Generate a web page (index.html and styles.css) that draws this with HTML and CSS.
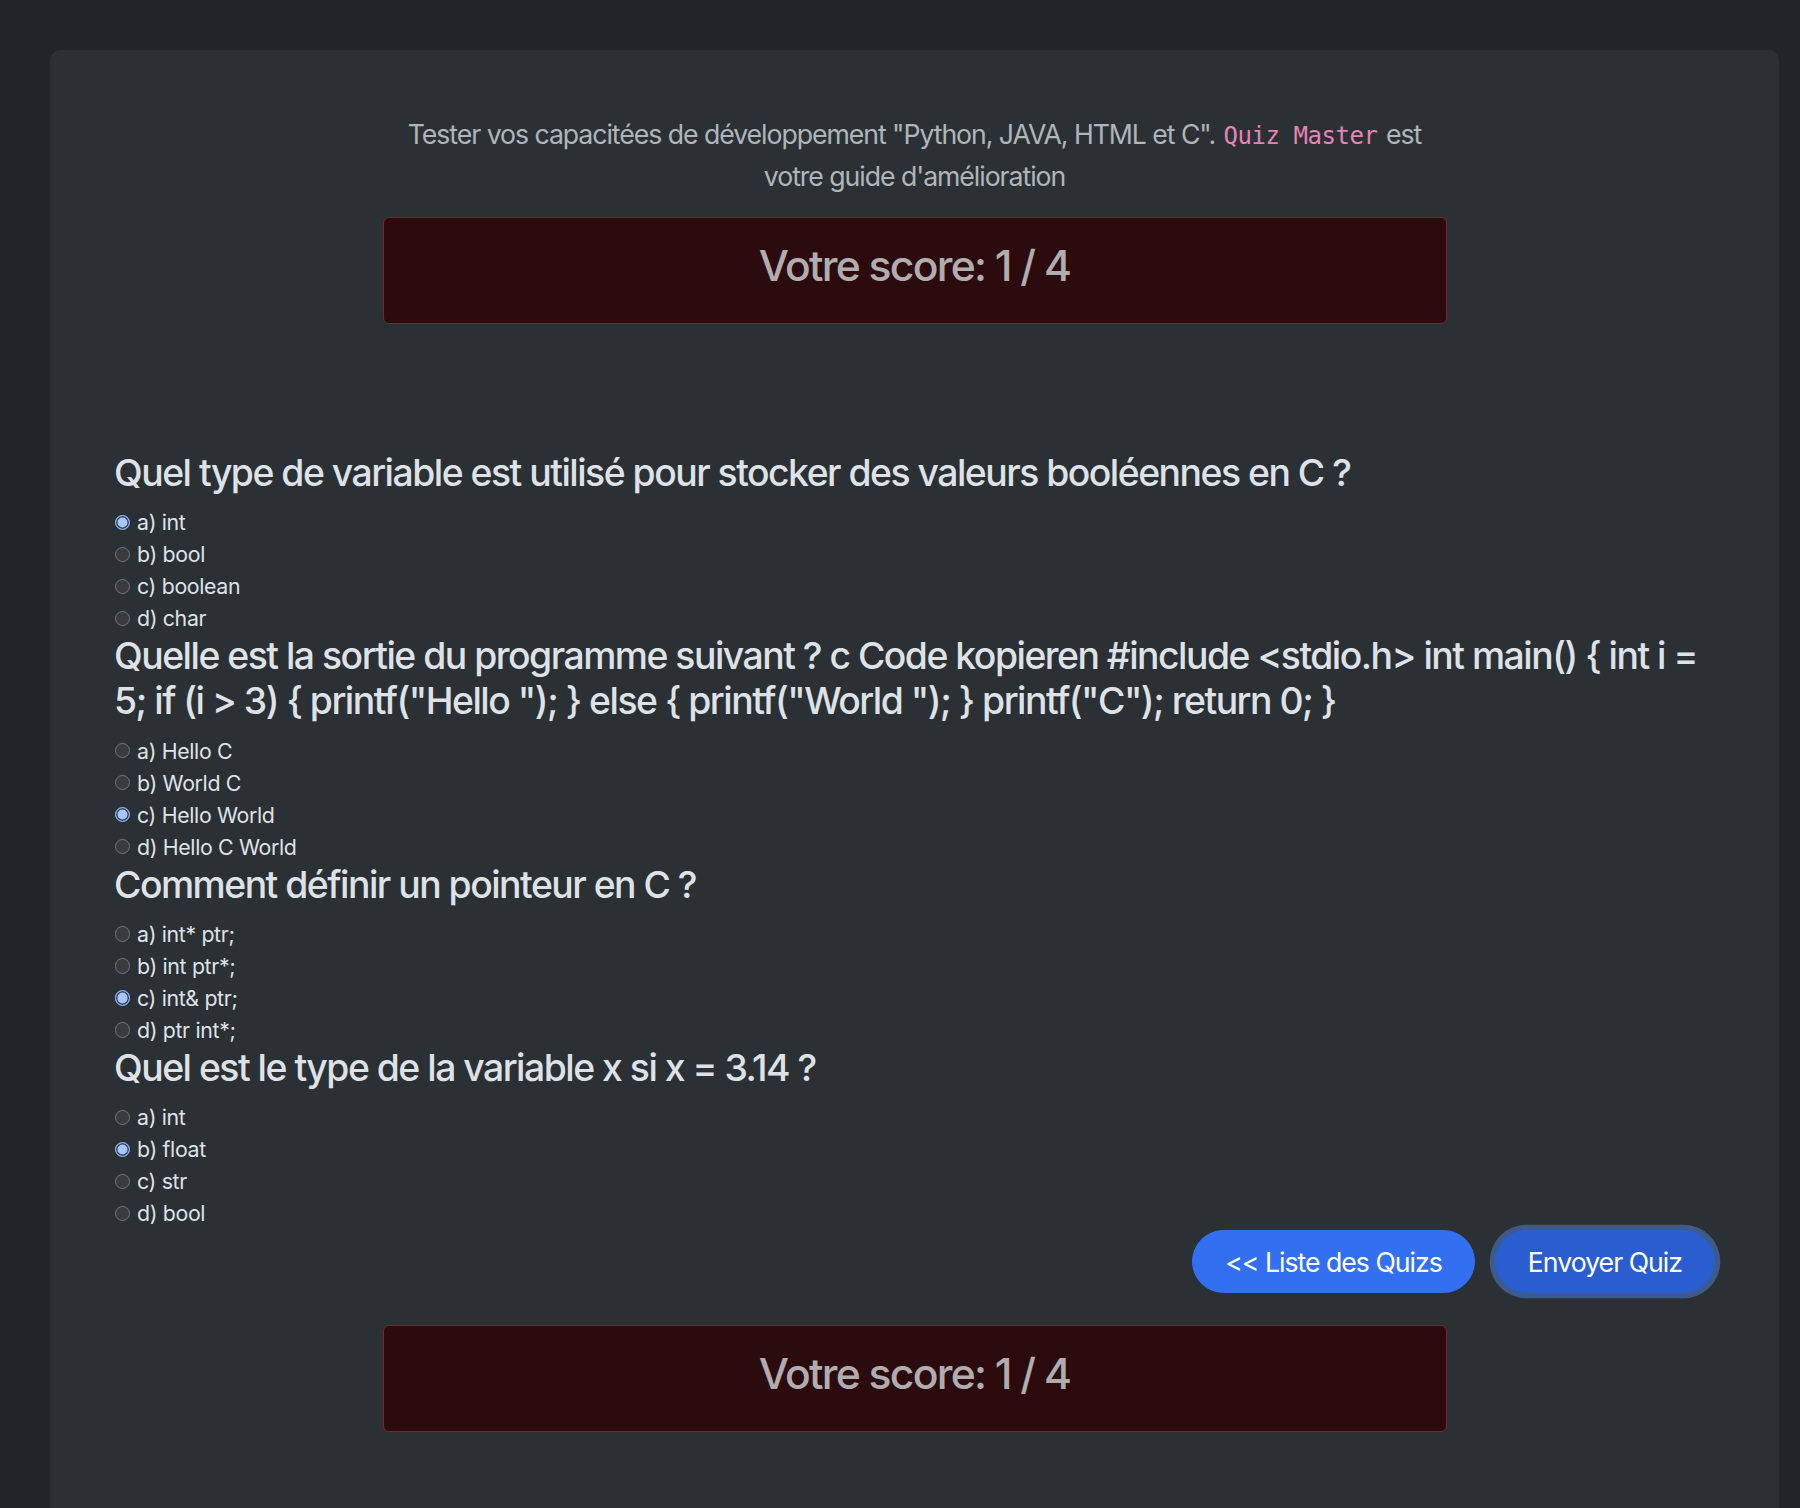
FILE: index.html
```html
<!DOCTYPE html>
<html lang="fr">
<head>
<meta charset="utf-8">
<title>Quiz Master</title>
<link rel="stylesheet" href="styles.css">
</head>
<body>
<main class="card">
  <p class="intro">Tester vos capacitées de développement "Python, JAVA, HTML et C". <code>Quiz Master</code> est votre guide d'amélioration</p>
  <div class="score"><h2>Votre score: 1 / 4</h2></div>

  <form class="quiz">
    <section class="question">
      <h3>Quel type de variable est utilisé pour stocker des valeurs booléennes en C ?</h3>
      <label class="opt"><input type="radio" name="q1" checked> a) int</label>
      <label class="opt"><input type="radio" name="q1"> b) bool</label>
      <label class="opt"><input type="radio" name="q1"> c) boolean</label>
      <label class="opt"><input type="radio" name="q1"> d) char</label>
    </section>
    <section class="question">
      <h3>Quelle est la sortie du programme suivant ? c Code kopieren #include &lt;stdio.h&gt; int main() { int i = 5; if (i &gt; 3) { printf("Hello "); } else { printf("World "); } printf("C"); return 0; }</h3>
      <label class="opt"><input type="radio" name="q2"> a) Hello C</label>
      <label class="opt"><input type="radio" name="q2"> b) World C</label>
      <label class="opt"><input type="radio" name="q2" checked> c) Hello World</label>
      <label class="opt"><input type="radio" name="q2"> d) Hello C World</label>
    </section>
    <section class="question">
      <h3>Comment définir un pointeur en C ?</h3>
      <label class="opt"><input type="radio" name="q3"> a) int* ptr;</label>
      <label class="opt"><input type="radio" name="q3"> b) int ptr*;</label>
      <label class="opt"><input type="radio" name="q3" checked> c) int&amp; ptr;</label>
      <label class="opt"><input type="radio" name="q3"> d) ptr int*;</label>
    </section>
    <section class="question">
      <h3>Quel est le type de la variable x si x = 3.14 ?</h3>
      <label class="opt"><input type="radio" name="q4"> a) int</label>
      <label class="opt"><input type="radio" name="q4" checked> b) float</label>
      <label class="opt"><input type="radio" name="q4"> c) str</label>
      <label class="opt"><input type="radio" name="q4"> d) bool</label>
    </section>
    <div class="actions">
      <a class="btn btn-list" href="#">&lt;&lt; Liste des Quizs</a>
      <button type="button" class="btn btn-send">Envoyer Quiz</button>
    </div>
  </form>

  <div class="score score-bottom"><h2>Votre score: 1 / 4</h2></div>
</main>
</body>
</html>
```

FILE: styles.css
```css
html, body {
  margin: 0;
  padding: 0;
}

body {
  background: #212529;
  color: #dee2e6;
  font-family: Inter, "Noto Sans", "Liberation Sans", sans-serif;
  font-size: 21.33px;
  line-height: 32px;
}

.card {
  display: block;
  margin: 50px 21px 0 50px;
  padding: 64px 64px 86px;
  background: #2b3035;
  border-radius: 10.67px 10.67px 0 0;
}

.intro {
  width: 1064px;
  margin: 0 auto 21.33px;
  text-align: center;
  font-size: 26.67px;
  line-height: 40px;
  font-weight: 400;
  color: rgba(222, 226, 230, 0.75);
  letter-spacing: -1.05px;
}

.intro code {
  margin: 0 2px;
  font-family: "DejaVu Sans Mono", "Liberation Mono", monospace;
  font-size: 0.9em;
  color: #e685b5;
  letter-spacing: -0.45px;
}

.score {
  box-sizing: border-box;
  width: 1064px;
  margin: 0 auto;
  padding: 21.33px;
  background: #2c0b0e;
  border: 1.33px solid #842029;
  border-radius: 6px;
  text-align: center;
}

.score h2 {
  margin: 0 0 10.67px;
  font-size: 42.67px;
  line-height: 51.2px;
  font-weight: 500;
  color: rgba(222, 226, 230, 0.75);
  letter-spacing: -1.75px;
}

.quiz {
  margin-top: 127px;
}

.question h3 {
  margin: 0 0 10.67px;
  font-size: 37.33px;
  line-height: 44.8px;
  font-weight: 500;
  color: #dee2e6;
  letter-spacing: -1.5px;
}

.opt {
  display: flex;
  align-items: center;
  height: 32px;
  gap: 7px;
  font-size: 21.33px;
  color: #dee2e6;
  letter-spacing: -0.35px;
}

.opt input {
  appearance: none;
  -webkit-appearance: none;
  box-sizing: border-box;
  width: 15.5px;
  height: 15.5px;
  margin: 0 0 0 0.5px;
  border-radius: 50%;
  border: 1px solid #737476;
  background: #3a3b3c;
  flex: none;
}

.opt input:checked {
  border: 1.5px solid #8db5f6;
  background: #a7c7fa;
  box-shadow: inset 0 0 0 1.5px #33405a;
}

.actions {
  display: flex;
  justify-content: flex-end;
  gap: 20px;
  margin-top: 1px;
  margin-bottom: 32px;
}

.btn {
  display: inline-block;
  box-sizing: border-box;
  height: 63px;
  padding: 10.67px 32px;
  font-family: inherit;
  font-size: 26.67px;
  line-height: 40px;
  font-weight: 400;
  color: #fff;
  text-decoration: none;
  border-radius: 40px;
  border: 1.33px solid transparent;
  letter-spacing: -1px;
  cursor: pointer;
}

.btn-list {
  background: #3370f1;
  border-color: #3370f1;
}

.btn-send {
  background: #2a5ed0;
  border-color: #2a5ed0;
  box-shadow: 0 0 0 5.33px #3e5a8b;
}
```
